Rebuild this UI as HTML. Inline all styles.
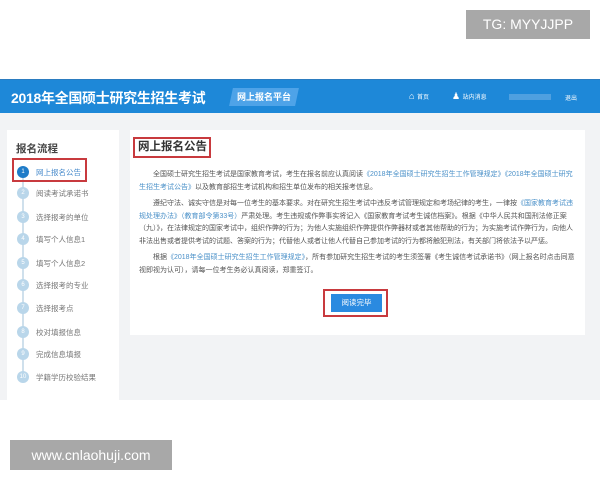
<!DOCTYPE html>
<html><head><meta charset="utf-8"><style>
*{margin:0;padding:0;box-sizing:border-box}
body{width:600px;height:480px;background:#fff;position:relative;overflow:hidden;font-family:"Liberation Sans","Noto Sans CJK SC",sans-serif}
.abs{position:absolute}
.tg{left:466px;top:10px;width:124px;height:29px;background:#a8a8a8;color:#fff;font-size:14px;line-height:29px;text-align:center}
.wm{left:10px;top:440px;width:162px;height:30px;background:#a8a8a8;color:#fff;font-size:14px;line-height:30px;text-align:center}
.hdr{left:0;top:79px;width:600px;height:34px;background:#1e88d8;border-top:1px solid #2b7cc0}
.body{left:0;top:113px;width:600px;height:287px;background:#f2f3f5}
.side{left:7px;top:130px;width:112px;height:270px;background:#fff}
.main{left:130px;top:130px;width:455px;height:205px;background:#fff}
.item{position:absolute;left:29px;font-size:7.5px;color:#777;white-space:nowrap}
.c{position:absolute;left:10px;width:12px;height:12px;border-radius:50%;background:#b9d6ea;color:#fff;font-size:6px;text-align:center;line-height:12px}
p{font-size:7px;line-height:12.5px;color:#555;text-indent:14px;margin-bottom:4px}
a{color:#4a90c8}
</style></head><body>
<div class="abs tg">TG: MYYJJPP</div>
<div class="abs hdr">
 <div class="abs" style="left:11px;top:8px;font-size:14px;font-weight:bold;color:#fff;white-space:nowrap;letter-spacing:-0.3px">2018年全国硕士研究生招生考试</div>
 <div class="abs" style="left:231px;top:8px;width:66px;height:18px;background:#4ea3e8;transform:skewX(-12deg)"></div>
 <div class="abs" style="left:237px;top:10px;font-size:9px;font-weight:bold;color:#fff">网上报名平台</div>
 <div class="abs" style="left:409px;top:11px;font-size:9px;color:#fff">⌂ <span style="font-size:6px">首页</span></div>
 <div class="abs" style="left:452px;top:11px;font-size:9px;color:#fff">♟ <span style="font-size:6px">站内消息</span></div>
 <div class="abs" style="left:509px;top:14px;width:42px;height:6px;background:#4fa0e0"></div>
 <div class="abs" style="left:565px;top:13px;font-size:6px;color:#fff">退出</div>
</div>
<div class="abs body"></div>
<div class="abs side">
 <div class="abs" style="left:9px;top:11px;font-size:10.5px;font-weight:bold;color:#444">报名流程</div>
 <div class="abs" style="left:15px;top:45px;width:2px;height:200px;background:#cfe0ec"></div>
 <div class="abs" style="left:5px;top:28px;width:75px;height:24px;border:2.5px solid #c83a3e"></div>
 <div class="c" style="top:36px;background:#1f7cc8">1</div><div class="item" style="top:37px;color:#4a8ccc">网上报名公告</div>
 <div class="c" style="top:57px">2</div><div class="item" style="top:58px">阅读考试承诺书</div>
 <div class="c" style="top:81px">3</div><div class="item" style="top:82px">选择报考的单位</div>
 <div class="c" style="top:103px">4</div><div class="item" style="top:104px">填写个人信息1</div>
 <div class="c" style="top:127px">5</div><div class="item" style="top:128px">填写个人信息2</div>
 <div class="c" style="top:149px">6</div><div class="item" style="top:150px">选择报考的专业</div>
 <div class="c" style="top:172px">7</div><div class="item" style="top:173px">选择报考点</div>
 <div class="c" style="top:196px">8</div><div class="item" style="top:197px">校对填报信息</div>
 <div class="c" style="top:218px">9</div><div class="item" style="top:219px">完成信息填报</div>
 <div class="c" style="top:241px">10</div><div class="item" style="top:242px">学籍学历校验结果</div>
</div>
<div class="abs main">
 <div class="abs" style="left:3px;top:7px;width:78px;height:21px;border:2.5px solid #c83a3e;font-size:11.5px;font-weight:bold;color:#333;line-height:16px;padding-left:3px;white-space:nowrap">网上报名公告</div>
 <div class="abs" style="left:9px;top:39px;width:438px">
  <p>全国硕士研究生招生考试是国家教育考试，考生在报名前应认真阅读<a>《2018年全国硕士研究生招生工作管理规定》《2018年全国硕士研究生招生考试公告》</a>以及教育部招生考试机构和招生单位发布的相关报考信息。</p>
  <p>遵纪守法、诚实守信是对每一位考生的基本要求。对在研究生招生考试中违反考试管理规定和考场纪律的考生，一律按<a>《国家教育考试违规处理办法》（教育部令第33号）</a>严肃处理。考生违规或作弊事实将记入《国家教育考试考生诚信档案》。根据《中华人民共和国刑法修正案（九）》，在法律规定的国家考试中，组织作弊的行为；为他人实施组织作弊提供作弊器材或者其他帮助的行为；为实施考试作弊行为，向他人非法出售或者提供考试的试题、答案的行为；代替他人或者让他人代替自己参加考试的行为都将触犯刑法，有关部门将依法予以严惩。</p>
  <p>根据<a>《2018年全国硕士研究生招生工作管理规定》</a>，所有参加研究生招生考试的考生须签署《考生诚信考试承诺书》（网上报名时点击同意视即视为认可），请每一位考生务必认真阅读，郑重签订。</p>
 </div>
 <div class="abs" style="left:193px;top:159px;width:65px;height:28px;border:2.5px solid #c83a3e"></div>
 <div class="abs" style="left:201px;top:164px;width:51px;height:18px;background:#2a8ae0;color:#fff;font-size:7.5px;text-align:center;line-height:18px">阅读完毕</div>
</div>
<div class="abs wm">www.cnlaohuji.com</div>
</body></html>
